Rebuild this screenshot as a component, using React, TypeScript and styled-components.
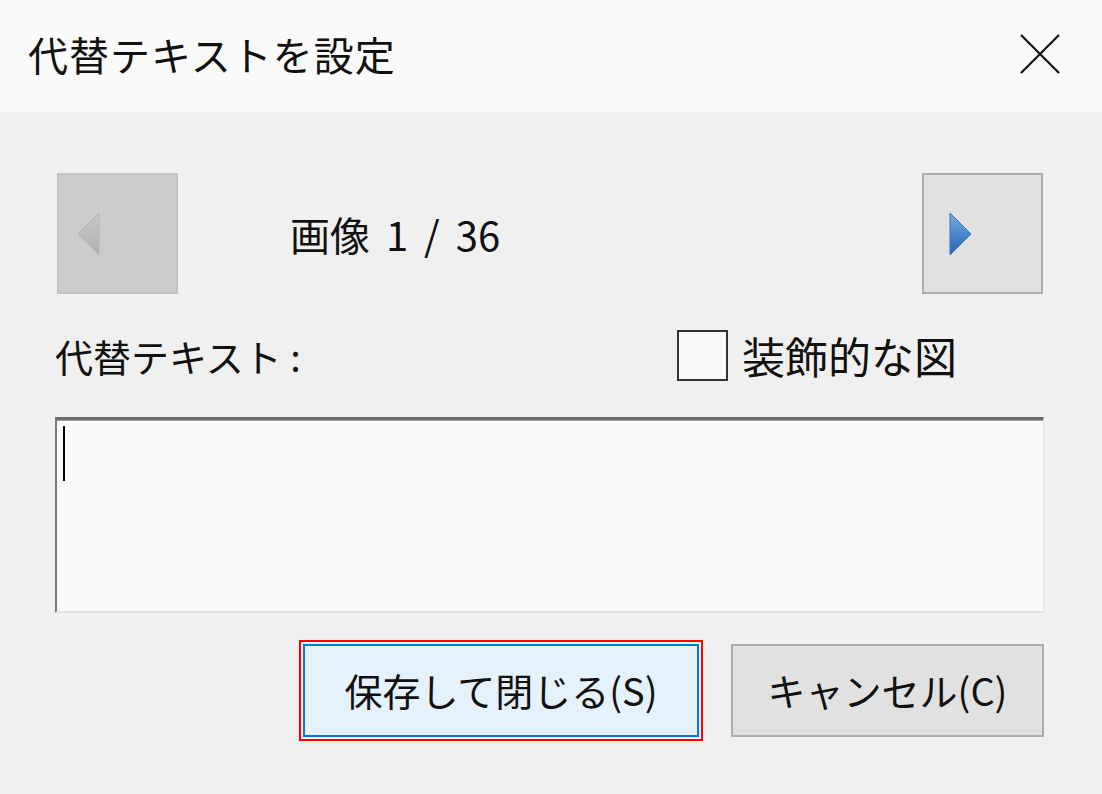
import React from 'react';
import styled, { createGlobalStyle } from 'styled-components';

const GlobalStyle = createGlobalStyle`
  html, body {
    margin: 0;
    padding: 0;
    background: #f0f0f0;
  }
  body {
    font-family: "Noto Sans CJK JP", "Noto Sans", sans-serif;
    color: #000;
  }
`;

const Dialog = styled.div`
  width: 1102px;
  height: 794px;
  background: #f0f0f0;
  display: flex;
  flex-direction: column;
  overflow: hidden;
`;

const TitleBar = styled.div`
  height: 112px;
  flex-shrink: 0;
  background: #fafafa;
  display: flex;
  align-items: center;
  justify-content: space-between;
  padding: 0 42px 0 28px;
`;

const Title = styled.h1`
  margin: 0 0 4px;
  font-size: 40px;
  font-weight: 400;
  letter-spacing: 1px;
  line-height: 1;
  color: #111;
`;

const CloseButton = styled.button`
  width: 40px;
  height: 40px;
  padding: 0;
  border: none;
  background: transparent;
  display: flex;
  margin-bottom: 4px;
`;

const Body = styled.div`
  flex: 1;
  padding: 61px 58px 0 55px;
  display: flex;
  flex-direction: column;
`;

const NavRow = styled.div`
  height: 121px;
  display: flex;
  align-items: center;
`;

const NavButton = styled.button<{ $disabled?: boolean }>`
  width: 121px;
  height: 121px;
  box-sizing: border-box;
  padding: 0;
  display: flex;
  align-items: center;
  justify-content: center;
  background: ${(p) => (p.$disabled ? '#cccccc' : '#e1e1e1')};
  border: 2px solid ${(p) => (p.$disabled ? '#c4c4c4' : '#adadad')};
`;

const PrevButton = styled(NavButton)`
  margin-left: 2px;
`;

const NextButton = styled(NavButton)`
  margin-left: auto;
  margin-right: 1px;
`;

const Counter = styled.span`
  margin-left: 112px;
  font-size: 40px;
  word-spacing: 7px;
  line-height: 1;
  color: #111;
`;

const LabelRow = styled.div`
  margin-top: 36px;
  height: 51px;
  display: flex;
  align-items: center;
  justify-content: space-between;
  padding-right: 87px;
`;

const FieldLabel = styled.span`
  font-size: 38px;
  line-height: 1;
  color: #111;
`;

const CheckLabel = styled.label`
  display: flex;
  align-items: center;
  gap: 14px;
  font-size: 43px;
  line-height: 1;
  color: #111;
`;

const CheckBox = styled.span`
  width: 51px;
  height: 51px;
  box-sizing: border-box;
  border: 2px solid #333;
  background: #fafafa;
`;

const TextBox = styled.div`
  margin-top: 36px;
  height: 196px;
  box-sizing: border-box;
  background: #fafafa;
  border-top: 3px solid #6a6a6a;
  border-left: 2px solid #7a7a7a;
  border-right: 1px solid #e3e3e3;
  border-bottom: 2px solid #e3e3e3;
  box-shadow: inset 0 1px 0 #a8a8a8;
  padding: 6px 0 0 6px;
`;

const Caret = styled.span`
  display: block;
  width: 2px;
  height: 55px;
  background: #000;
`;

const ButtonRow = styled.div`
  margin-top: 31px;
  display: flex;
  justify-content: flex-end;
  gap: 32px;
`;

const ActionButton = styled.button<{ $primary?: boolean; $w: number }>`
  width: ${(p) => p.$w}px;
  height: 93px;
  box-sizing: border-box;
  font-family: "Noto Sans CJK JP", "Noto Sans", sans-serif;
  font-size: 38px;
  font-weight: 400;
  color: #111;
  padding: 0 0 2px;
  background: ${(p) => (p.$primary ? '#e5f1fb' : '#e1e1e1')};
  border: 2px solid ${(p) => (p.$primary ? '#0078d7' : '#adadad')};
  outline: ${(p) => (p.$primary ? '2px solid #ff0000' : 'none')};
  outline-offset: 2px;
`;

const LeftArrow = () => (
  <svg width="24" height="44" viewBox="0 0 24 44" style={{ marginLeft: -58 }}>
    <defs>
      <linearGradient id="gl" x1="0" y1="0" x2="0" y2="1">
        <stop offset="0" stopColor="#c6c6c6" />
        <stop offset="0.5" stopColor="#bdbdbd" />
        <stop offset="1" stopColor="#aeaeae" />
      </linearGradient>
    </defs>
    <polygon points="22,1 1,22 22,43" fill="url(#gl)" stroke="#b3b3b3" strokeWidth="1" />
  </svg>
);

const RightArrow = () => (
  <svg width="24" height="44" viewBox="0 0 24 44" style={{ marginLeft: -46 }}>
    <defs>
      <linearGradient id="gr" x1="0" y1="0" x2="0" y2="1">
        <stop offset="0" stopColor="#7aaee4" />
        <stop offset="0.5" stopColor="#4b87cf" />
        <stop offset="1" stopColor="#2a63ac" />
      </linearGradient>
    </defs>
    <polygon points="2,1 23,22 2,43" fill="url(#gr)" stroke="#3b74bd" strokeWidth="1" />
  </svg>
);

const CloseIcon = () => (
  <svg width="40" height="40" viewBox="0 0 40 40">
    <path d="M1 1 L39 39 M39 1 L1 39" stroke="#111" strokeWidth="2.2" fill="none" />
  </svg>
);

export default function App(): JSX.Element {
  return (
    <>
      <GlobalStyle />
      <Dialog>
        <TitleBar>
          <Title>代替テキストを設定</Title>
          <CloseButton aria-label="閉じる">
            <CloseIcon />
          </CloseButton>
        </TitleBar>
        <Body>
          <NavRow>
            <PrevButton $disabled>
              <LeftArrow />
            </PrevButton>
            <Counter>画像 1 / 36</Counter>
            <NextButton>
              <RightArrow />
            </NextButton>
          </NavRow>
          <LabelRow>
            <FieldLabel>代替テキスト :</FieldLabel>
            <CheckLabel>
              <CheckBox />
              装飾的な図
            </CheckLabel>
          </LabelRow>
          <TextBox>
            <Caret />
          </TextBox>
          <ButtonRow>
            <ActionButton $primary $w={396}>保存して閉じる(S)</ActionButton>
            <ActionButton $w={313}>キャンセル(C)</ActionButton>
          </ButtonRow>
        </Body>
      </Dialog>
    </>
  );
}
